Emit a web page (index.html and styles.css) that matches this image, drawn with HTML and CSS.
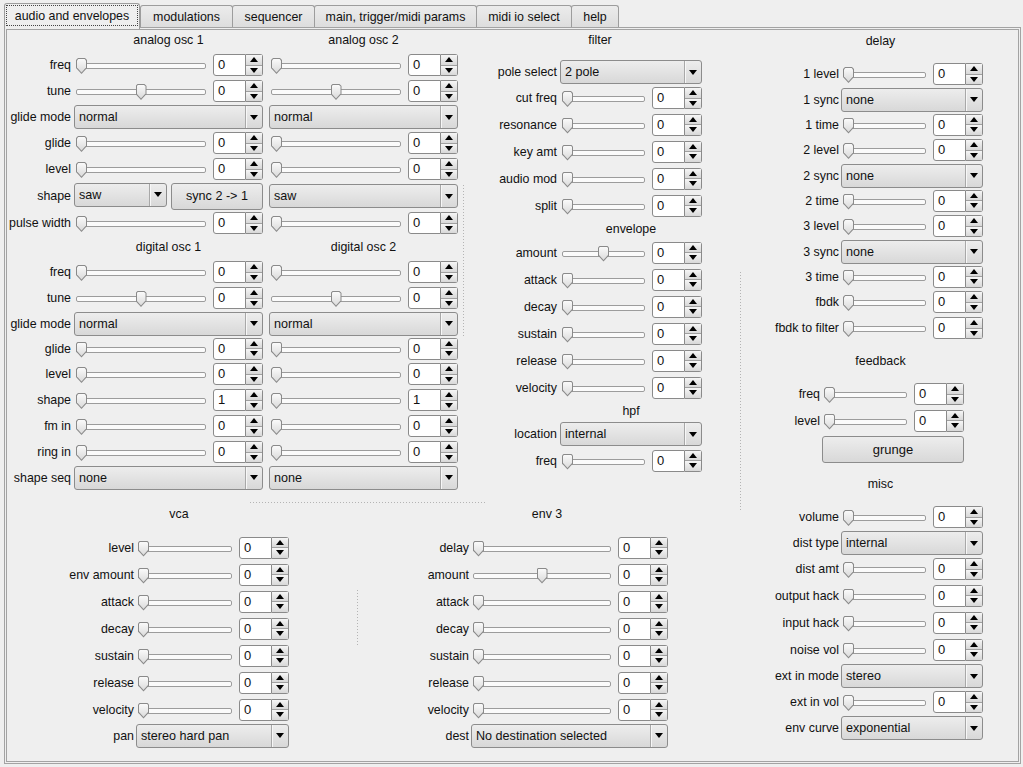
FILE: index.html
```html
<!DOCTYPE html>
<html>
<head>
<meta charset="utf-8">
<link rel="stylesheet" href="styles.css">
</head>
<body>
<div class="tabbar">
  <div class="tab sel t1"><span>audio and envelopes</span></div>
  <div class="tab t2">modulations</div>
  <div class="tab t3">sequencer</div>
  <div class="tab t4">main, trigger/midi params</div>
  <div class="tab t5">midi io select</div>
  <div class="tab t6">help</div>
</div>
<div class="panel">
  <div class="leftarea">
    <div class="toprow">
      <div class="sec osc">
        <div class="hdr2 h22"><span>analog osc 1</span><span>analog osc 2</span></div>
        <div class="row h26"><div class="lbl">freq</div><div class="cmp"><div class="sl"><i></i></div><div class="spin"><span class="val">0</span><span class="btns"><b class="up"></b><b class="dn"></b></span></div></div><div class="cmp"><div class="sl"><i></i></div><div class="spin"><span class="val">0</span><span class="btns"><b class="up"></b><b class="dn"></b></span></div></div></div>
        <div class="row h26"><div class="lbl">tune</div><div class="cmp"><div class="sl"><i style="--v:.5"></i></div><div class="spin"><span class="val">0</span><span class="btns"><b class="up"></b><b class="dn"></b></span></div></div><div class="cmp"><div class="sl"><i style="--v:.5"></i></div><div class="spin"><span class="val">0</span><span class="btns"><b class="up"></b><b class="dn"></b></span></div></div></div>
        <div class="row h26"><div class="lbl">glide mode</div><div class="combo"><span>normal</span><b></b></div><div class="combo"><span>normal</span><b></b></div></div>
        <div class="row h26"><div class="lbl">glide</div><div class="cmp"><div class="sl"><i></i></div><div class="spin"><span class="val">0</span><span class="btns"><b class="up"></b><b class="dn"></b></span></div></div><div class="cmp"><div class="sl"><i></i></div><div class="spin"><span class="val">0</span><span class="btns"><b class="up"></b><b class="dn"></b></span></div></div></div>
        <div class="row h26"><div class="lbl">level</div><div class="cmp"><div class="sl"><i></i></div><div class="spin"><span class="val">0</span><span class="btns"><b class="up"></b><b class="dn"></b></span></div></div><div class="cmp"><div class="sl"><i></i></div><div class="spin"><span class="val">0</span><span class="btns"><b class="up"></b><b class="dn"></b></span></div></div></div>
        <div class="row h28"><div class="lbl">shape</div><div class="cmp4"><div class="combo sm"><span>saw</span><b></b></div><div class="btn sync">sync 2 -&gt; 1</div></div><div class="combo"><span>saw</span><b></b></div></div>
        <div class="row h26"><div class="lbl">pulse width</div><div class="cmp"><div class="sl"><i></i></div><div class="spin"><span class="val">0</span><span class="btns"><b class="up"></b><b class="dn"></b></span></div></div><div class="cmp"><div class="sl"><i></i></div><div class="spin"><span class="val">0</span><span class="btns"><b class="up"></b><b class="dn"></b></span></div></div></div>
        <div class="hdr2 h23"><span>digital osc 1</span><span>digital osc 2</span></div>
        <div class="row h26"><div class="lbl">freq</div><div class="cmp"><div class="sl"><i></i></div><div class="spin"><span class="val">0</span><span class="btns"><b class="up"></b><b class="dn"></b></span></div></div><div class="cmp"><div class="sl"><i></i></div><div class="spin"><span class="val">0</span><span class="btns"><b class="up"></b><b class="dn"></b></span></div></div></div>
        <div class="row h26"><div class="lbl">tune</div><div class="cmp"><div class="sl"><i style="--v:.5"></i></div><div class="spin"><span class="val">0</span><span class="btns"><b class="up"></b><b class="dn"></b></span></div></div><div class="cmp"><div class="sl"><i style="--v:.5"></i></div><div class="spin"><span class="val">0</span><span class="btns"><b class="up"></b><b class="dn"></b></span></div></div></div>
        <div class="row h25"><div class="lbl">glide mode</div><div class="combo"><span>normal</span><b></b></div><div class="combo"><span>normal</span><b></b></div></div>
        <div class="row h25"><div class="lbl">glide</div><div class="cmp"><div class="sl"><i></i></div><div class="spin"><span class="val">0</span><span class="btns"><b class="up"></b><b class="dn"></b></span></div></div><div class="cmp"><div class="sl"><i></i></div><div class="spin"><span class="val">0</span><span class="btns"><b class="up"></b><b class="dn"></b></span></div></div></div>
        <div class="row h26"><div class="lbl">level</div><div class="cmp"><div class="sl"><i></i></div><div class="spin"><span class="val">0</span><span class="btns"><b class="up"></b><b class="dn"></b></span></div></div><div class="cmp"><div class="sl"><i></i></div><div class="spin"><span class="val">0</span><span class="btns"><b class="up"></b><b class="dn"></b></span></div></div></div>
        <div class="row h26"><div class="lbl">shape</div><div class="cmp"><div class="sl"><i></i></div><div class="spin"><span class="val">1</span><span class="btns"><b class="up"></b><b class="dn"></b></span></div></div><div class="cmp"><div class="sl"><i></i></div><div class="spin"><span class="val">1</span><span class="btns"><b class="up"></b><b class="dn"></b></span></div></div></div>
        <div class="row h26"><div class="lbl">fm in</div><div class="cmp"><div class="sl"><i></i></div><div class="spin"><span class="val">0</span><span class="btns"><b class="up"></b><b class="dn"></b></span></div></div><div class="cmp"><div class="sl"><i></i></div><div class="spin"><span class="val">0</span><span class="btns"><b class="up"></b><b class="dn"></b></span></div></div></div>
        <div class="row h26"><div class="lbl">ring in</div><div class="cmp"><div class="sl"><i></i></div><div class="spin"><span class="val">0</span><span class="btns"><b class="up"></b><b class="dn"></b></span></div></div><div class="cmp"><div class="sl"><i></i></div><div class="spin"><span class="val">0</span><span class="btns"><b class="up"></b><b class="dn"></b></span></div></div></div>
        <div class="row h25"><div class="lbl">shape seq</div><div class="combo"><span>none</span><b></b></div><div class="combo"><span>none</span><b></b></div></div>
      </div>

      <div class="sec flt">
        <div class="hdr h29">filter</div>
        <div class="row h26"><div class="lbl">pole select</div><div class="combo"><span>2 pole</span><b></b></div></div>
        <div class="row h26"><div class="lbl">cut freq</div><div class="cmp"><div class="sl"><i></i></div><div class="spin"><span class="val">0</span><span class="btns"><b class="up"></b><b class="dn"></b></span></div></div></div>
        <div class="row h27"><div class="lbl">resonance</div><div class="cmp"><div class="sl"><i></i></div><div class="spin"><span class="val">0</span><span class="btns"><b class="up"></b><b class="dn"></b></span></div></div></div>
        <div class="row h27"><div class="lbl">key amt</div><div class="cmp"><div class="sl"><i></i></div><div class="spin"><span class="val">0</span><span class="btns"><b class="up"></b><b class="dn"></b></span></div></div></div>
        <div class="row h27"><div class="lbl">audio mod</div><div class="cmp"><div class="sl"><i></i></div><div class="spin"><span class="val">0</span><span class="btns"><b class="up"></b><b class="dn"></b></span></div></div></div>
        <div class="row h27"><div class="lbl">split</div><div class="cmp"><div class="sl"><i></i></div><div class="spin"><span class="val">0</span><span class="btns"><b class="up"></b><b class="dn"></b></span></div></div></div>
        <div class="hdr sub h20">envelope</div>
        <div class="row h27"><div class="lbl">amount</div><div class="cmp"><div class="sl"><i style="--v:.5"></i></div><div class="spin"><span class="val">0</span><span class="btns"><b class="up"></b><b class="dn"></b></span></div></div></div>
        <div class="row h27"><div class="lbl">attack</div><div class="cmp"><div class="sl"><i></i></div><div class="spin"><span class="val">0</span><span class="btns"><b class="up"></b><b class="dn"></b></span></div></div></div>
        <div class="row h27"><div class="lbl">decay</div><div class="cmp"><div class="sl"><i></i></div><div class="spin"><span class="val">0</span><span class="btns"><b class="up"></b><b class="dn"></b></span></div></div></div>
        <div class="row h27"><div class="lbl">sustain</div><div class="cmp"><div class="sl"><i></i></div><div class="spin"><span class="val">0</span><span class="btns"><b class="up"></b><b class="dn"></b></span></div></div></div>
        <div class="row h27"><div class="lbl">release</div><div class="cmp"><div class="sl"><i></i></div><div class="spin"><span class="val">0</span><span class="btns"><b class="up"></b><b class="dn"></b></span></div></div></div>
        <div class="row h27"><div class="lbl">velocity</div><div class="cmp"><div class="sl"><i></i></div><div class="spin"><span class="val">0</span><span class="btns"><b class="up"></b><b class="dn"></b></span></div></div></div>
        <div class="hdr sub h20">hpf</div>
        <div class="row h26"><div class="lbl">location</div><div class="combo"><span>internal</span><b></b></div></div>
        <div class="row h27"><div class="lbl">freq</div><div class="cmp"><div class="sl"><i></i></div><div class="spin"><span class="val">0</span><span class="btns"><b class="up"></b><b class="dn"></b></span></div></div></div>
      </div>
    </div>

    <div class="botrow">
      <div class="sec vca">
        <div class="hdr hb">vca</div>
        <div class="row h27"><div class="lbl">level</div><div class="cmp"><div class="sl"><i></i></div><div class="spin"><span class="val">0</span><span class="btns"><b class="up"></b><b class="dn"></b></span></div></div></div>
        <div class="row h27"><div class="lbl">env amount</div><div class="cmp"><div class="sl"><i></i></div><div class="spin"><span class="val">0</span><span class="btns"><b class="up"></b><b class="dn"></b></span></div></div></div>
        <div class="row h27"><div class="lbl">attack</div><div class="cmp"><div class="sl"><i></i></div><div class="spin"><span class="val">0</span><span class="btns"><b class="up"></b><b class="dn"></b></span></div></div></div>
        <div class="row h27"><div class="lbl">decay</div><div class="cmp"><div class="sl"><i></i></div><div class="spin"><span class="val">0</span><span class="btns"><b class="up"></b><b class="dn"></b></span></div></div></div>
        <div class="row h27"><div class="lbl">sustain</div><div class="cmp"><div class="sl"><i></i></div><div class="spin"><span class="val">0</span><span class="btns"><b class="up"></b><b class="dn"></b></span></div></div></div>
        <div class="row h27"><div class="lbl">release</div><div class="cmp"><div class="sl"><i></i></div><div class="spin"><span class="val">0</span><span class="btns"><b class="up"></b><b class="dn"></b></span></div></div></div>
        <div class="row h27"><div class="lbl">velocity</div><div class="cmp"><div class="sl"><i></i></div><div class="spin"><span class="val">0</span><span class="btns"><b class="up"></b><b class="dn"></b></span></div></div></div>
        <div class="row h25"><div class="lbl">pan</div><div class="combo"><span>stereo hard pan</span><b></b></div></div>
      </div>
      <div class="sec env3">
        <div class="hdr hb">env 3</div>
        <div class="row h27"><div class="lbl">delay</div><div class="cmp"><div class="sl"><i></i></div><div class="spin"><span class="val">0</span><span class="btns"><b class="up"></b><b class="dn"></b></span></div></div></div>
        <div class="row h27"><div class="lbl">amount</div><div class="cmp"><div class="sl"><i style="--v:.5"></i></div><div class="spin"><span class="val">0</span><span class="btns"><b class="up"></b><b class="dn"></b></span></div></div></div>
        <div class="row h27"><div class="lbl">attack</div><div class="cmp"><div class="sl"><i></i></div><div class="spin"><span class="val">0</span><span class="btns"><b class="up"></b><b class="dn"></b></span></div></div></div>
        <div class="row h27"><div class="lbl">decay</div><div class="cmp"><div class="sl"><i></i></div><div class="spin"><span class="val">0</span><span class="btns"><b class="up"></b><b class="dn"></b></span></div></div></div>
        <div class="row h27"><div class="lbl">sustain</div><div class="cmp"><div class="sl"><i></i></div><div class="spin"><span class="val">0</span><span class="btns"><b class="up"></b><b class="dn"></b></span></div></div></div>
        <div class="row h27"><div class="lbl">release</div><div class="cmp"><div class="sl"><i></i></div><div class="spin"><span class="val">0</span><span class="btns"><b class="up"></b><b class="dn"></b></span></div></div></div>
        <div class="row h27"><div class="lbl">velocity</div><div class="cmp"><div class="sl"><i></i></div><div class="spin"><span class="val">0</span><span class="btns"><b class="up"></b><b class="dn"></b></span></div></div></div>
        <div class="row h25"><div class="lbl">dest</div><div class="combo"><span>No destination selected</span><b></b></div></div>
      </div>
    </div>
  </div>

  <div class="rightcol">
    <div class="sec rc dly">
      <div class="hdr h31">delay</div>
      <div class="row h26"><div class="lbl">1 level</div><div class="cmp"><div class="sl"><i></i></div><div class="spin"><span class="val">0</span><span class="btns"><b class="up"></b><b class="dn"></b></span></div></div></div>
      <div class="row h25"><div class="lbl">1 sync</div><div class="combo"><span>none</span><b></b></div></div>
      <div class="row h25"><div class="lbl">1 time</div><div class="cmp"><div class="sl"><i></i></div><div class="spin"><span class="val">0</span><span class="btns"><b class="up"></b><b class="dn"></b></span></div></div></div>
      <div class="row h26"><div class="lbl">2 level</div><div class="cmp"><div class="sl"><i></i></div><div class="spin"><span class="val">0</span><span class="btns"><b class="up"></b><b class="dn"></b></span></div></div></div>
      <div class="row h25"><div class="lbl">2 sync</div><div class="combo"><span>none</span><b></b></div></div>
      <div class="row h25"><div class="lbl">2 time</div><div class="cmp"><div class="sl"><i></i></div><div class="spin"><span class="val">0</span><span class="btns"><b class="up"></b><b class="dn"></b></span></div></div></div>
      <div class="row h26"><div class="lbl">3 level</div><div class="cmp"><div class="sl"><i></i></div><div class="spin"><span class="val">0</span><span class="btns"><b class="up"></b><b class="dn"></b></span></div></div></div>
      <div class="row h25"><div class="lbl">3 sync</div><div class="combo"><span>none</span><b></b></div></div>
      <div class="row h25"><div class="lbl">3 time</div><div class="cmp"><div class="sl"><i></i></div><div class="spin"><span class="val">0</span><span class="btns"><b class="up"></b><b class="dn"></b></span></div></div></div>
      <div class="row h26"><div class="lbl">fbdk</div><div class="cmp"><div class="sl"><i></i></div><div class="spin"><span class="val">0</span><span class="btns"><b class="up"></b><b class="dn"></b></span></div></div></div>
      <div class="row h26"><div class="lbl">fbdk to filter</div><div class="cmp"><div class="sl"><i></i></div><div class="spin"><span class="val">0</span><span class="btns"><b class="up"></b><b class="dn"></b></span></div></div></div>
    </div>
    <div class="hdr fbh">feedback</div>
    <div class="sec rc fb">
      <div class="row h26"><div class="lbl">freq</div><div class="cmp"><div class="sl"><i></i></div><div class="spin"><span class="val">0</span><span class="btns"><b class="up"></b><b class="dn"></b></span></div></div></div>
      <div class="row h27"><div class="lbl">level</div><div class="cmp"><div class="sl"><i></i></div><div class="spin"><span class="val">0</span><span class="btns"><b class="up"></b><b class="dn"></b></span></div></div></div>
      <div class="row h31"><div class="lbl"></div><div class="btn grunge">grunge</div></div>
    </div>
    <div class="hdr mh">misc</div>
    <div class="sec rc misc">
      <div class="row h26"><div class="lbl">volume</div><div class="cmp"><div class="sl"><i></i></div><div class="spin"><span class="val">0</span><span class="btns"><b class="up"></b><b class="dn"></b></span></div></div></div>
      <div class="row h26"><div class="lbl">dist type</div><div class="combo"><span>internal</span><b></b></div></div>
      <div class="row h26"><div class="lbl">dist amt</div><div class="cmp"><div class="sl"><i></i></div><div class="spin"><span class="val">0</span><span class="btns"><b class="up"></b><b class="dn"></b></span></div></div></div>
      <div class="row h27"><div class="lbl">output hack</div><div class="cmp"><div class="sl"><i></i></div><div class="spin"><span class="val">0</span><span class="btns"><b class="up"></b><b class="dn"></b></span></div></div></div>
      <div class="row h27"><div class="lbl">input hack</div><div class="cmp"><div class="sl"><i></i></div><div class="spin"><span class="val">0</span><span class="btns"><b class="up"></b><b class="dn"></b></span></div></div></div>
      <div class="row h27"><div class="lbl">noise vol</div><div class="cmp"><div class="sl"><i></i></div><div class="spin"><span class="val">0</span><span class="btns"><b class="up"></b><b class="dn"></b></span></div></div></div>
      <div class="row h26"><div class="lbl">ext in mode</div><div class="combo"><span>stereo</span><b></b></div></div>
      <div class="row h26"><div class="lbl">ext in vol</div><div class="cmp"><div class="sl"><i></i></div><div class="spin"><span class="val">0</span><span class="btns"><b class="up"></b><b class="dn"></b></span></div></div></div>
      <div class="row h26"><div class="lbl">env curve</div><div class="combo"><span>exponential</span><b></b></div></div>
    </div>
  </div>

  <div class="dots v d1"></div>
  <div class="dots h d2"></div>
  <div class="dots v d3"></div>
  <div class="dots v d4"></div>
</div>
</body>
</html>
```

FILE: styles.css
```css
* { box-sizing: border-box; }
html, body { margin: 0; padding: 0; background: #efefef; }
body {
  font-family: "Liberation Sans", Arial, sans-serif;
  font-size: 12.4px;
  color: #111;
  width: 1023px;
  height: 767px;
  overflow: hidden;
}

/* tabs */
.tabbar { display: flex; align-items: flex-end; height: 27px; padding-left: 4px; }
.tab {
  height: 22px;
  border: 1px solid #9d9d9d;
  border-bottom: none;
  border-radius: 3px 3px 0 0;
  background: linear-gradient(#ececec, #dddddd);
  display: flex; align-items: center; justify-content: center;
  white-space: nowrap;
  margin-left: -1px;
}
.tab.sel {
  height: 26px; margin-bottom: -2px; margin-left: 0;
  background: #efefef; position: relative; z-index: 1;
  padding: 1px 1px 3px;
  align-items: stretch;
}
.tab.sel span { flex: 1; display: flex; align-items: center; justify-content: center; border: 1px dotted #444; }
.t1 { width: 136px; }
.t2 { width: 93px; margin-left: 0; }
.t3 { width: 83px; }
.t4 { width: 163px; }
.t5 { width: 96px; }
.t6 { width: 48px; }

/* panel */
.panel {
  margin-left: 4px;
  width: 1017px; height: 737px;
  border: 3px double #a3a3a3;
  position: relative;
  display: flex;
}
.leftarea { width: 733px; display: flex; flex-direction: column; }
.toprow { display: flex; height: 460px; }
.botrow { display: flex; }
.rightcol { flex: 1; display: flex; flex-direction: column; align-items: flex-start; }

.osc { margin-left: 1px; }
.flt { margin-left: 40px; }
.vca { margin-left: 62px; }
.env3 { margin-left: 137px; }
.dly, .misc { margin-left: 38px; width: 205px; }
.fb { margin-left: 19px; width: 205px; }

/* rows */
.row { display: flex; align-items: center; }
.h20 { height: 20px; } .h22 { height: 22px; } .h23 { height: 23px; }
.h25 { height: 25px; } .h26 { height: 26px; } .h27 { height: 27px; }
.h28 { height: 28px; } .h29 { height: 29px; } .h31 { height: 31px; }

.lbl { display: flex; justify-content: flex-end; white-space: nowrap; flex: none; }
.osc .lbl { width: 63px; margin-right: 3px; }
.flt .lbl { width: 59px; margin-right: 3px; }
.rc .lbl { width: 61px; margin-right: 2px; }
.vca .lbl { width: 65px; margin-right: 2px; }
.env3 .lbl { width: 43px; margin-right: 2px; }

.hdr { text-align: center; white-space: nowrap; line-height: 20px; }
.flt .hdr.sub { padding-left: 62px; }
.hdr.h31 { line-height: 22px; }
.hb { height: 44px; padding-top: 14px; }
.rightcol > .fbh { height: 40px; line-height: 40px; margin-left: 38px; width: 205px; }
.rightcol > .mh { height: 39px; line-height: 38px; margin-left: 38px; width: 205px; }

.hdr2 { display: flex; padding-left: 66px; gap: 6px; line-height: 20px; }
.hdr2.h23 { line-height: 23px; }
.hdr2 span { width: 189px; text-align: center; }

.cmp { display: flex; gap: 6px; align-items: center; }
.osc .cmp + .cmp, .osc .combo + .combo, .osc .cmp4 + .combo { margin-left: 6px; }
.cmp4 { display: flex; gap: 4px; }

/* slider */
.sl { position: relative; height: 22px; flex: none; }
.osc .sl { width: 133px; }
.flt .sl, .rc .sl { width: 86px; }
.vca .sl { width: 97px; }
.env3 .sl { width: 141px; }
.sl::before {
  content: ""; position: absolute; left: 2px; right: 1px; top: 9px; height: 4px;
  border: 1px solid #9c9c9c; border-radius: 2px; background: #fbfbfb;
}
.sl i {
  position: absolute; top: 4px;
  left: calc(2px + var(--v, 0) * (100% - 14px));
  width: 11px; height: 16px;
  background: #8a8a8a;
  clip-path: polygon(0 2px, 2px 0, 9px 0, 11px 2px, 11px 10px, 5.5px 16px, 0 10px);
}
.sl i::before {
  content: ""; position: absolute; left: 1px; top: 1px; width: 9px; height: 14px;
  background: linear-gradient(#fafafa, #d9d9d9);
  clip-path: polygon(0 1.4px, 1.4px 0, 7.6px 0, 9px 1.4px, 9px 8.6px, 4.5px 13.4px, 0 8.6px);
}

/* spin box */
.spin { width: 50px; height: 22px; display: flex; flex: none; }
.spin .val {
  flex: 1; background: #fff; border: 1px solid #8a8a8a; border-radius: 3px 0 0 3px;
  padding-left: 4px; line-height: 20px; font-size: 13px;
}
.spin .btns {
  width: 17px; display: flex; flex-direction: column;
  border: 1px solid #8a8a8a; border-left: none; border-radius: 0 3px 3px 0;
}
.btns b {
  flex: 1; display: flex; align-items: center; justify-content: center;
  background: linear-gradient(#f6f6f6, #d8d8d8);
}
.btns b + b { border-top: 1px solid #a0a0a0; }
.btns .up::before {
  content: ""; border-left: 4px solid transparent; border-right: 4px solid transparent;
  border-bottom: 5px solid #000;
}
.btns .dn::before {
  content: ""; border-left: 4px solid transparent; border-right: 4px solid transparent;
  border-top: 5px solid #000;
}

/* combo */
.combo {
  height: 24px; flex: none;
  border: 1px solid #8c8c8c; border-radius: 3px;
  background: linear-gradient(#ededed, #d8d8d8);
  display: flex; align-items: center;
  font-size: 12.6px;
}
.combo span { flex: 1; padding-left: 4px; white-space: nowrap; overflow: hidden; }
.combo b {
  width: 17px; align-self: stretch;
  border-left: 1px solid #a8a8a8;
  box-shadow: inset 1px 0 0 #f7f7f7;
  display: flex; align-items: center; justify-content: center;
}
.combo b::before {
  content: ""; border-left: 4px solid transparent; border-right: 4px solid transparent;
  border-top: 5px solid #000;
}
.osc .combo { width: 189px; }
.osc .combo.sm { width: 93px; }
.flt .combo, .rc .combo { width: 142px; }
.vca .combo { width: 153px; }
.env3 .combo { width: 197px; }

/* buttons */
.btn {
  border: 1px solid #8c8c8c; border-radius: 3px;
  background: linear-gradient(#ededed, #d8d8d8);
  display: flex; align-items: center; justify-content: center;
  white-space: nowrap; font-size: 12.6px;
}
.sync { width: 92px; height: 27px; }
.grunge { width: 142px; height: 27px; font-size: 13px; }

/* dotted separators */
.dots { position: absolute; }
.dots.v { width: 1px; background: repeating-linear-gradient(to bottom, #b4b4b4 0 1px, transparent 1px 3px); }
.dots.h { height: 1px; background: repeating-linear-gradient(to right, #b4b4b4 0 1px, transparent 1px 3px); }
.d1 { left: 456px; top: 155px; height: 153px; }
.d2 { left: 243px; top: 472px; width: 237px; }
.d3 { left: 733px; top: 242px; height: 238px; }
.d4 { left: 350px; top: 560px; height: 55px; }
```
